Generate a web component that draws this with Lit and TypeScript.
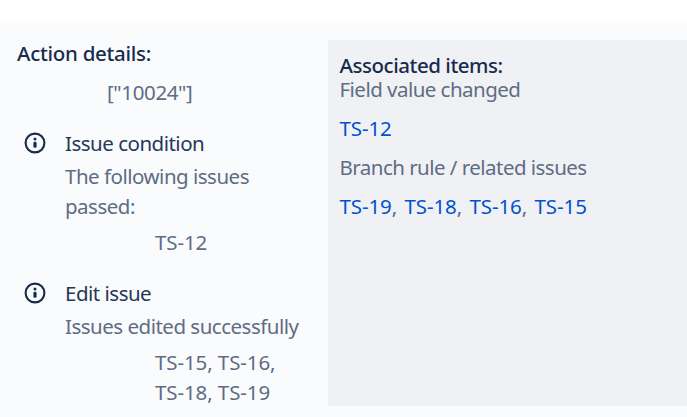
import { LitElement, html, css, svg } from "lit";
import { customElement } from "lit/decorators.js";

@customElement("app-root")
export class AppRoot extends LitElement {
  static styles = css`
    :host {
      display: block;
      width: 687px;
      height: 417px;
      box-sizing: border-box;
      padding-top: 23px;
      background: #fff;
      font: 20.5px/30px "Noto Sans", "Open Sans", sans-serif;
      letter-spacing: -0.5px;
      color: #5e6c84;
      overflow: hidden;
    }
    .log {
      display: flex;
      height: 394px;
      background: #fafbfd;
    }
    .details {
      width: 311px;
      flex: none;
      padding: 15px 0 0 17px;
      white-space: nowrap;
    }
    h3 {
      margin: 0;
      font-size: inherit;
      font-weight: 500;
      letter-spacing: -0.28px;
      color: #172b4d;
    }
    .panel h3 {
      letter-spacing: -0.46px;
    }
    .value {
      margin: 9px 0 21px 90px;
      letter-spacing: -0.38px;
    }
    .entry {
      display: grid;
      grid-template-columns: 48px 1fr;
      margin-bottom: 21px;
    }
    .icon {
      width: 22px;
      height: 22px;
      margin: 4px 0 0 7px;
      display: block;
    }
    .name {
      color: #253858;
      margin-bottom: 3px;
    }
    .items {
      margin: 6px 0 0 90px;
      letter-spacing: -0.1px;
    }
    .panel {
      flex: 1;
      height: 353px;
      margin-top: 17px;
      padding: 13px 0 0 11.5px;
      background: #f0f1f5;
      line-height: 24px;
      white-space: nowrap;
    }
    .group + .group {
      margin-top: 15px;
    }
    .group-title {
      letter-spacing: -0.53px;
    }
    .links {
      display: flex;
      gap: 7.4px;
      margin-top: 15px;
      letter-spacing: -0.1px;
    }
    a {
      color: #0052cc;
      text-decoration: none;
    }
  `;

  private info() {
    return html`<svg class="icon" viewBox="0 0 22 22">
      ${svg`<circle cx="11" cy="11" r="9.4" fill="none" stroke="#172b4d" stroke-width="2.1"/>
      <circle cx="11" cy="7" r="1.5" fill="#172b4d"/>
      <rect x="9.4" y="9.7" width="3.2" height="6" rx="1.3" fill="#172b4d"/>`}
    </svg>`;
  }

  private entry(name: string, message: string[], items: string[]) {
    return html`<div class="entry">
      ${this.info()}
      <div>
        <div class="name">${name}</div>
        ${message.map((m) => html`<div>${m}</div>`)}
        <div class="items">${items.map((i) => html`<div>${i}</div>`)}</div>
      </div>
    </div>`;
  }

  private group(title: string, keys: string[]) {
    return html`<div class="group">
      <div class="group-title">${title}</div>
      <div class="links">
        ${keys.map((k, i) => html`<span><a href="#">${k}</a>${i < keys.length - 1 ? "," : ""}</span>`)}
      </div>
    </div>`;
  }

  render() {
    return html`<div class="log">
      <div class="details">
        <h3>Action details:</h3>
        <div class="value">["10024"]</div>
        ${this.entry("Issue condition", ["The following issues", "passed:"], ["TS-12"])}
        ${this.entry("Edit issue", ["Issues edited successfully"], ["TS-15, TS-16,", "TS-18, TS-19"])}
      </div>
      <div class="panel">
        <h3>Associated items:</h3>
        ${this.group("Field value changed", ["TS-12"])}
        ${this.group("Branch rule / related issues", ["TS-19", "TS-18", "TS-16", "TS-15"])}
      </div>
    </div>`;
  }
}
